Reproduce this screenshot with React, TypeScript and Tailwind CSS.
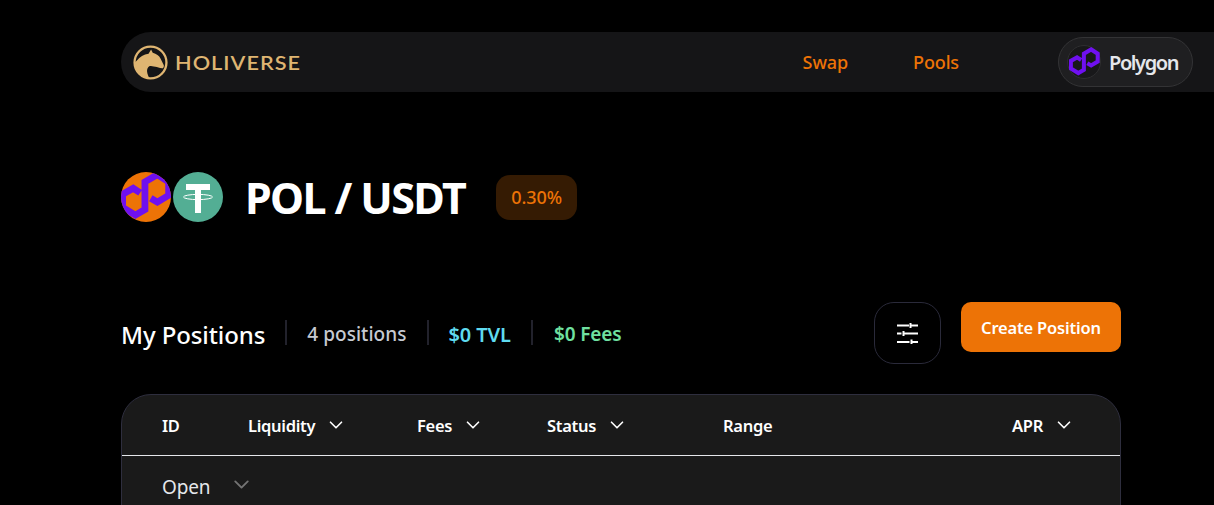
import React from "react";
import { ChevronDown } from "lucide-react";

const POLY =
  "M19.5 21 L13 16.8 L3 22.4 L3 34.8 L15 42 L24 36.8 L24 10.8 L35.7 4 L46.3 10.8 L46.3 23.4 L35.7 29.8 L29.5 26.2";

function Horse() {
  return (
    <svg viewBox="0 0 36 36" className="w-[35px] h-[35px] shrink-0" fill="none">
      <circle cx="18" cy="18" r="16.4" stroke="#dfb572" strokeWidth="2.4" />
      <path
        d="M2 18 L4 16 C7 12 11 9.5 16 9 L18.6 4.5 L20.3 8 C24 9 27 11 28.3 13.8 L31.7 20.7 C32 22.5 31 24 30 24 C27 24 25 22.6 23 22.4 C20.5 22 18 21.6 17.2 21.7 C15 23 14.2 25 14.5 27.6 C14.8 30 15.8 32.5 17.2 34.5 C9 34 2 27 2 18 Z"
        fill="#dfb572"
      />
    </svg>
  );
}

function Sliders() {
  return (
    <svg viewBox="0 0 21 21" className="w-[21px] h-[21px]" fill="none" stroke="#fff" strokeWidth="2">
      <path d="M0 2.5h12M13.5 0v5M14.5 2.5h6.5" />
      <path d="M0 10.5h4.5M6.5 8v5M7.5 10.5h13.5" />
      <path d="M0 19h12.5M14.5 16.5v4.5M15.5 19h5.5" />
    </svg>
  );
}

function Th({ label, x, chev }: { label: string; x: string; chev?: boolean }) {
  return (
    <div className={`flex items-center gap-[10px] ${x}`}>
      <span className="pt-[2px] text-[16.5px] font-semibold text-white tracking-[-0.3px]">{label}</span>
      {chev && <ChevronDown className="w-[22px] h-[22px] text-white" strokeWidth={1.8} />}
    </div>
  );
}

export default function App() {
  return (
    <div className="w-[1214px] h-[505px] overflow-hidden bg-black pl-[121px] pt-[32px] font-['Noto_Sans','Open_Sans',sans-serif]">
      <nav className="h-[60px] w-[1093px] rounded-l-[30px] bg-[#151517] flex items-center pl-[12px]">
        <Horse />
        <span className="ml-[7px] text-[19px] leading-none font-['Lato',sans-serif] font-semibold text-[#dfb572] tracking-[0.9px] scale-x-[1.14] origin-left">
          HOLIVERSE
        </span>
        <span className="ml-auto text-[18px] font-medium text-[#ed7306] tracking-[-0.12px]">Swap</span>
        <span className="ml-[65px] text-[18px] font-medium text-[#ed7306] tracking-[-0.12px]">Pools</span>
        <div className="ml-[99px] mr-[21px] w-[135px] h-[50px] rounded-[25px] border border-[#333335] bg-[#1f1f21] flex items-center pl-[8px]">
          <span className="w-[34px] h-[34px] rounded-full border border-[#2e2e30] bg-[#18181a] flex items-center justify-center shrink-0">
            <svg viewBox="0 0 50 50" className="w-[31px] h-[31px]" fill="none">
              <path d={POLY} stroke="#6f10f0" strokeWidth="6.5" />
            </svg>
          </span>
          <span className="ml-[8px] pt-[1px] text-[20px] font-semibold text-[#e5e7eb] tracking-[-1.4px]">Polygon</span>
        </div>
      </nav>

      <div className="w-[1000px]">
        <div className="mt-[80px] h-[50px] flex items-center">
          <span className="w-[50px] h-[50px] rounded-full bg-[#ed7306] overflow-hidden shrink-0">
            <svg viewBox="1.5 1.5 47 47" className="w-[50px] h-[50px]" fill="none">
              <path d={POLY} stroke="#6f10f0" strokeWidth="6.4" />
            </svg>
          </span>
          <span className="ml-[2px] w-[50px] h-[50px] rounded-full bg-[#53ae94] overflow-hidden shrink-0">
            <svg viewBox="0 0 50 50" className="w-[50px] h-[50px]" fill="none">
              <rect x="13" y="12" width="24" height="6" fill="#fff" />
              <rect x="22" y="17" width="6" height="24" fill="#fff" />
              <ellipse cx="25" cy="25" rx="14.5" ry="2.6" stroke="#fff" strokeWidth="1" />
            </svg>
          </span>
          <span className="ml-[22px] text-[43px] leading-none font-bold text-white tracking-[-1.6px]">POL / USDT</span>
          <span className="ml-[31px] w-[81px] h-[45px] rounded-[14px] bg-[#351b03] flex items-center justify-center text-[18px] font-medium text-[#ed7306] tracking-[-0.1px]">
            0.30%
          </span>
        </div>

        <div className="mt-[80px] flex items-start">
          <div className="flex items-center h-[62px] pt-[3px]">
            <span className="text-[24px] font-medium text-white tracking-[-0.1px]">My Positions</span>
            <span className="ml-[20px] w-[2px] h-[25px] bg-[#22222c] -translate-y-[2px]" />
            <span className="ml-[20px] text-[19px] font-medium text-[#c6cad2] tracking-[0.05px]">4 positions</span>
            <span className="ml-[20px] w-[2px] h-[25px] bg-[#22222c] -translate-y-[2px]" />
            <span className="ml-[20px] text-[20px] font-semibold text-[#5fdbf0] tracking-[-0.1px]">$0 TVL</span>
            <span className="ml-[20px] w-[2px] h-[25px] bg-[#22222c] -translate-y-[2px]" />
            <span className="ml-[21px] text-[19px] font-semibold text-[#6fe0a0] tracking-[-0.15px]">$0 Fees</span>
          </div>
          <button className="ml-auto w-[67px] h-[62px] rounded-[20px] border border-[#2a2a3a] flex items-center justify-center">
            <Sliders />
          </button>
          <button className="ml-[20px] w-[160px] h-[50px] rounded-[10px] bg-[#ed7306] pt-[2px] text-[16.5px] font-semibold text-white tracking-[-0.18px]">
            Create Position
          </button>
        </div>

        <div className="mt-[30px] h-[200px] rounded-t-[30px] border border-[#2e2e3e] bg-[#1a1a1a]">
          <div className="h-[61px] flex items-center border-b border-[#e5e7eb] pl-[40px]">
            <Th label="ID" x="w-[86px]" />
            <Th label="Liquidity" x="w-[169px]" chev />
            <Th label="Fees" x="w-[130px]" chev />
            <Th label="Status" x="w-[176px]" chev />
            <Th label="Range" x="w-[289px]" />
            <Th label="APR" x="" chev />
          </div>
          <div className="flex items-center pl-[40px] pt-[17px]">
            <span className="text-[19px] text-[#e5e7eb] tracking-[-0.15px]">Open</span>
            <ChevronDown className="ml-[19px] w-[25px] h-[25px] text-[#737373] -translate-y-[3px]" strokeWidth={1.8} />
          </div>
        </div>
      </div>
    </div>
  );
}
